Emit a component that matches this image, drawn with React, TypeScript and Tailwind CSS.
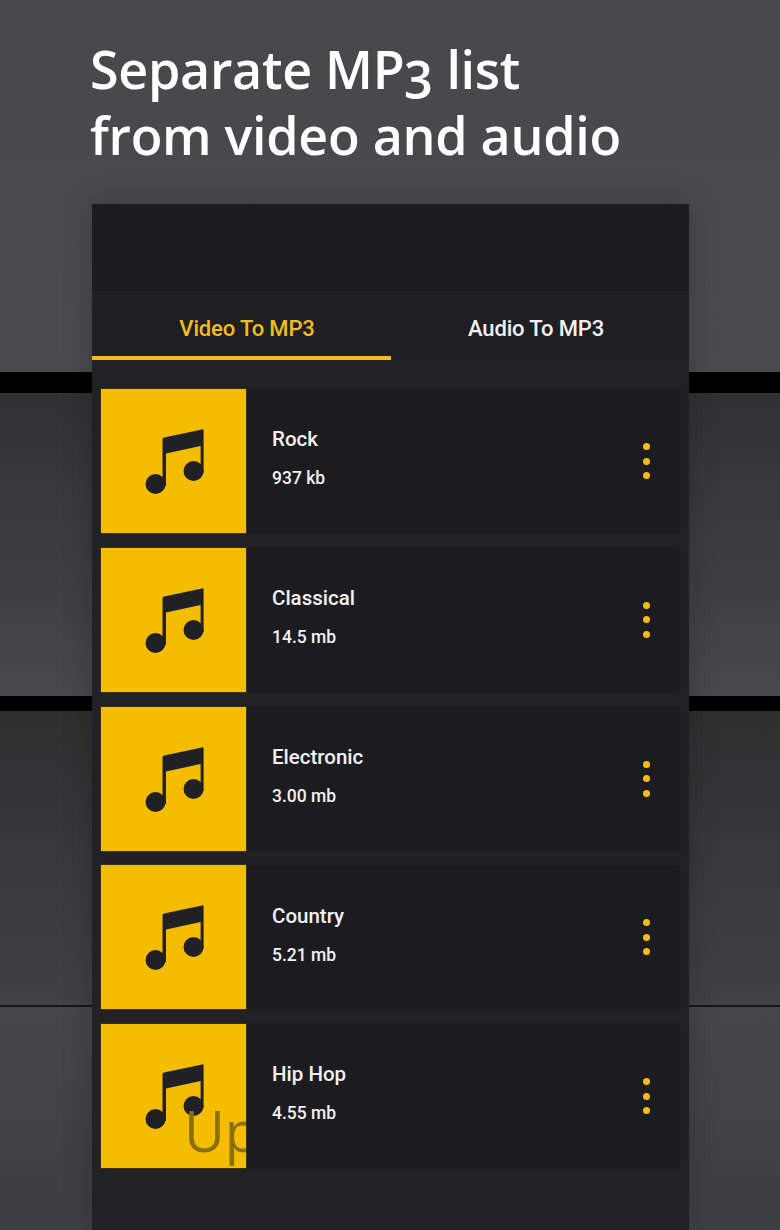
import React from 'react';

const TRACKS = [
  { name: 'Rock', size: '937 kb' },
  { name: 'Classical', size: '14.5 mb' },
  { name: 'Electronic', size: '3.00 mb' },
  { name: 'Country', size: '5.21 mb' },
  { name: 'Hip Hop', size: '4.55 mb' },
];

const NoteIcon = () => (
  <svg viewBox="0 0 145 144" className="absolute inset-0 w-full h-full" fill="#212125">
    <circle cx="54.5" cy="95" r="10" />
    <circle cx="92.5" cy="82" r="10" />
    <path d="M61.5 50 C61.5 49.5 62 49 63 48.5 L101 40.4 C102 40.2 102.6 40.6 102.6 41.5 L102.6 84 L99.6 84 L99.6 57 L65 64.5 L65 97 L61.5 97 Z" />
  </svg>
);

const Row = ({ name, size, last }: { name: string; size: string; last: boolean }) => (
  <div className="flex h-[144px] bg-[#1c1c20] rounded-[2px] shadow-[0_0_3px_rgba(0,0,0,0.12)]">
    <div className="relative w-[145px] shrink-0 bg-[#f5bd00] overflow-hidden outline outline-1 outline-[#3a3010]">
      <NoteIcon />
      {last && (
        <span className="absolute left-[83px] top-[68px] text-[56px] leading-[76px] font-normal text-[#8a7008] font-['Open_Sans',sans-serif]">
          Up
        </span>
      )}
    </div>
    <div className="flex-1 flex flex-col pl-[26px] pt-[36.45px] font-['Roboto',sans-serif] font-medium text-[#f1f1f3]">
      <div className="text-[20.5px] leading-[28px]">{name}</div>
      <div className="mt-[13px] text-[17.5px] leading-[24px]">{size}</div>
    </div>
    <div className="w-[68px] shrink-0 flex flex-col items-center justify-center gap-[7.5px] pl-[1px]">
      <div className="w-[7px] h-[7px] rounded-full bg-[#f5bd10]" />
      <div className="w-[7px] h-[7px] rounded-full bg-[#f5bd10]" />
      <div className="w-[7px] h-[7px] rounded-full bg-[#f5bd10]" />
    </div>
  </div>
);

export default function App() {
  return (
    <div className="relative w-[780px] h-[1230px] overflow-hidden bg-[#404144]">
      {/* Backdrop shelves */}
      <div className="absolute inset-0 flex flex-col">
        <div className="h-[372px] bg-gradient-to-b from-[#47484a] to-[#4a4b4e]" />
        <div className="h-[21px] bg-black" />
        <div className="h-[303px] bg-gradient-to-b from-[#2f3133] to-[#47484b]" />
        <div className="h-[15px] bg-black" />
        <div className="h-[294px] bg-gradient-to-b from-[#2f2f30] to-[#414245]" />
        <div className="h-[2px] bg-[#17171a]" />
        <div className="flex-1 bg-gradient-to-b from-[#454649] to-[#3e3f42]" />
      </div>

      <div className="relative flex flex-col h-full">
        <h1 className="pl-[90px] pt-[36px] h-[204px] text-[52px] leading-[66px] font-semibold text-white font-['Open_Sans',sans-serif] [font-feature-settings:'onum'] tracking-[-0.3px]">
          Separate MP3 list
          <br />
          from video and audio
        </h1>

        <div className="ml-[92px] w-[597px] flex-1 flex flex-col bg-[#222226] shadow-[0_0_28px_rgba(0,0,0,0.22)]">
          <div className="h-[87px] bg-[#1c1c20]" />
          <div className="h-[69px] flex bg-[#1f1f23] font-['Roboto',sans-serif] font-medium text-[22px] tracking-[-0.15px]">
            <div className="relative w-[299px] flex items-center justify-center pt-[5px] pl-[11px] text-[#f2bd1b]">
              Video To MP3
              <div className="absolute left-0 right-0 bottom-0 h-[4px] bg-[#f2bd1b]" />
            </div>
            <div className="flex-1 flex items-center justify-center pt-[5px] pr-[8px] text-[#f1f1f3]">
              Audio To MP3
            </div>
          </div>
          <div className="flex flex-col gap-[14.75px] pl-[9px] pr-[9px] pt-[29px]">
            {TRACKS.map((t, i) => (
              <Row key={t.name} name={t.name} size={t.size} last={i === TRACKS.length - 1} />
            ))}
          </div>
        </div>
      </div>
    </div>
  );
}
